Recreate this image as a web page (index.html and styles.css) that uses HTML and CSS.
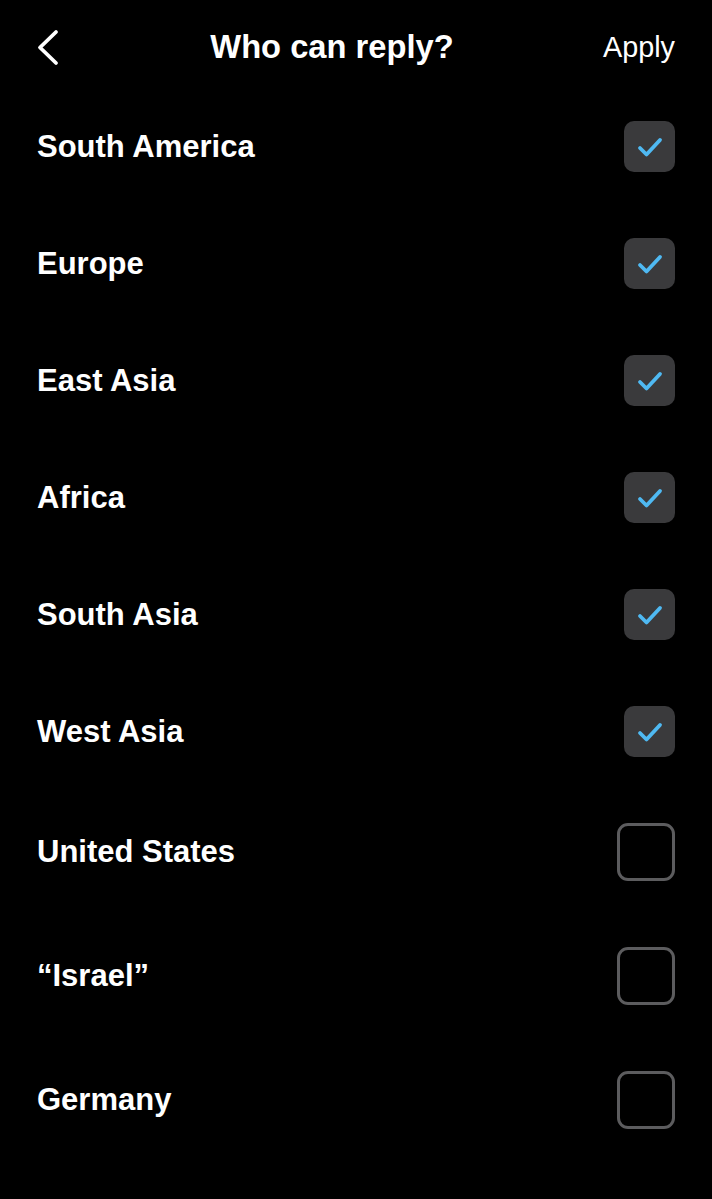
FILE: index.html
```html
<!DOCTYPE html>
<html lang="en">
<head>
    <meta charset="UTF-8">
    <meta name="viewport" content="width=device-width, initial-scale=1.0">
    <title>Who can reply?</title>
    <link rel="stylesheet" href="styles.css">
</head>
<body>
    <div class="screen">
        <header class="top-bar">
            <button class="back-button" aria-label="Back">
                <svg width="24" height="38" viewBox="0 0 24 38">
                    <path d="M19 4 L3 19.5 L19 35" fill="none" stroke="#fff" stroke-width="3.8" stroke-linecap="round" stroke-linejoin="round"/>
                </svg>
            </button>
            <h1 class="title">Who can reply?</h1>
            <button class="apply-button">Apply</button>
        </header>

        <ul class="region-list">
            <li class="region-row">
                <span class="region-name">South America</span>
                <span class="box checked"><svg width="26" height="22" viewBox="0 0 26 22"><path d="M3 12 L9.5 18.5 L23 4" fill="none" stroke="#4fb9f2" stroke-width="3.8" stroke-linecap="round" stroke-linejoin="round"/></svg></span>
            </li>
            <li class="region-row">
                <span class="region-name">Europe</span>
                <span class="box checked"><svg width="26" height="22" viewBox="0 0 26 22"><path d="M3 12 L9.5 18.5 L23 4" fill="none" stroke="#4fb9f2" stroke-width="3.8" stroke-linecap="round" stroke-linejoin="round"/></svg></span>
            </li>
            <li class="region-row">
                <span class="region-name">East Asia</span>
                <span class="box checked"><svg width="26" height="22" viewBox="0 0 26 22"><path d="M3 12 L9.5 18.5 L23 4" fill="none" stroke="#4fb9f2" stroke-width="3.8" stroke-linecap="round" stroke-linejoin="round"/></svg></span>
            </li>
            <li class="region-row">
                <span class="region-name">Africa</span>
                <span class="box checked"><svg width="26" height="22" viewBox="0 0 26 22"><path d="M3 12 L9.5 18.5 L23 4" fill="none" stroke="#4fb9f2" stroke-width="3.8" stroke-linecap="round" stroke-linejoin="round"/></svg></span>
            </li>
            <li class="region-row">
                <span class="region-name">South Asia</span>
                <span class="box checked"><svg width="26" height="22" viewBox="0 0 26 22"><path d="M3 12 L9.5 18.5 L23 4" fill="none" stroke="#4fb9f2" stroke-width="3.8" stroke-linecap="round" stroke-linejoin="round"/></svg></span>
            </li>
            <li class="region-row">
                <span class="region-name">West Asia</span>
                <span class="box checked"><svg width="26" height="22" viewBox="0 0 26 22"><path d="M3 12 L9.5 18.5 L23 4" fill="none" stroke="#4fb9f2" stroke-width="3.8" stroke-linecap="round" stroke-linejoin="round"/></svg></span>
            </li>
            <li class="region-row">
                <span class="region-name">United States</span>
                <span class="box"></span>
            </li>
            <li class="region-row">
                <span class="region-name">“Israel”</span>
                <span class="box"></span>
            </li>
            <li class="region-row">
                <span class="region-name">Germany</span>
                <span class="box"></span>
            </li>
        </ul>
    </div>
</body>
</html>
```

FILE: styles.css
```css
body {
    margin: 0;
    background-color: #000;
    color: #fff;
    font-family: "Liberation Sans", Arial, sans-serif;
}
.screen {
    min-height: 100vh;
    background-color: #000;
}
.top-bar {
    display: flex;
    align-items: center;
    height: 88px;
    padding: 0 37px;
    box-sizing: border-box;
    margin-top: 3px;
}
.back-button {
    background: none;
    border: none;
    padding: 0;
    width: 24px;
    display: flex;
    align-items: center;
    cursor: pointer;
}
.title {
    flex: 1;
    margin: 0;
    text-align: center;
    font-size: 32.7px;
    font-weight: bold;
}
.apply-button {
    background: none;
    border: none;
    padding: 0;
    color: #fff;
    font-family: "Liberation Sans", Arial, sans-serif;
    font-size: 28.8px;
    cursor: pointer;
}
.region-list {
    list-style: none;
    margin: -3px 0 0;
    padding: 0;
}
.region-row {
    display: flex;
    align-items: center;
    justify-content: space-between;
    padding: 33px 37px;
}
.region-name {
    font-size: 31px;
    font-weight: bold;
}
.box {
    width: 58px;
    height: 58px;
    box-sizing: border-box;
    border: 3px solid #5c5c5e;
    border-radius: 11px;
    display: flex;
    align-items: center;
    justify-content: center;
}
.box.checked {
    width: 51px;
    height: 51px;
    border: none;
    border-radius: 10px;
    background-color: #3a3a3c;
}
.box.checked svg {
    margin-top: 1px;
}
```
